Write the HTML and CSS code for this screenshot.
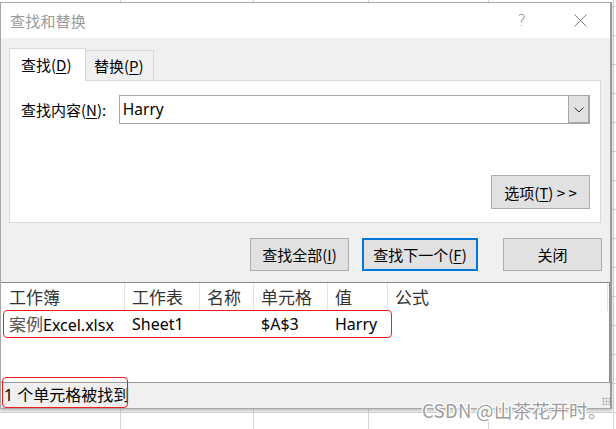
FILE: index.html
```html
<!DOCTYPE html>
<html lang="zh">
<head>
<meta charset="utf-8">
<title>查找和替换</title>
<link rel="stylesheet" href="styles.css">
</head>
<body>
<div class="dialog">
  <div class="titlebar">
    <span class="title">查找和替换</span>
    <span class="help">?</span>
    <svg class="close" width="13" height="13" viewBox="0 0 13 13"><path d="M0.5 0.5L12.5 12.5M12.5 0.5L0.5 12.5" stroke="#808080" stroke-width="1" fill="none"/></svg>
  </div>
  <div class="content">
    <div class="tabs">
      <div class="tab active">查找(<u>D</u>)</div>
      <div class="tab">替换(<u>P</u>)</div>
    </div>
    <div class="panel">
      <div class="find-row">
        <span class="label">查找内容(<u>N</u>):</span>
        <div class="combo">
          <span class="combo-text">Harry</span>
          <span class="combo-btn"><svg width="10" height="6" viewBox="0 0 10 6"><path d="M0.5 0.5L5 5L9.5 0.5" stroke="#333" stroke-width="1" fill="none"/></svg></span>
        </div>
      </div>
      <div class="opt-row">
        <button class="btn opt">选项(<u>T</u>)&nbsp;&gt; &gt;</button>
      </div>
    </div>
    <div class="actions">
      <button class="btn all">查找全部(<u>I</u>)</button>
      <button class="btn next">查找下一个(<u>F</u>)</button>
      <button class="btn closebtn">关闭</button>
    </div>
  </div>
  <div class="results">
    <div class="grid head">
      <div class="cell">工作簿</div>
      <div class="cell">工作表</div>
      <div class="cell">名称</div>
      <div class="cell">单元格</div>
      <div class="cell">值</div>
      <div class="cell">公式</div>
    </div>
    <div class="grid row">
      <div class="cell"><span class="cn">案例</span>Excel.xlsx</div>
      <div class="cell">Sheet1</div>
      <div class="cell"></div>
      <div class="cell">$A$3</div>
      <div class="cell">Harry</div>
      <div class="cell"></div>
    </div>
  </div>
  <div class="status">1 个单元格被找到</div>
</div>
<div class="mark mark-row"></div>
<div class="mark mark-status"></div>
<div class="grip"></div>
<div class="watermark">CSDN @山茶花开时。</div>
</body>
</html>
```
FILE: styles.css
```css
html, body {
  margin: 0;
  padding: 0;
}
body {
  width: 616px;
  height: 429px;
  overflow: hidden;
  position: relative;
  font-family: "Noto Sans", "Noto Sans CJK SC", sans-serif;
  color: #000;
  background-color: #fff;
  background-image:
    linear-gradient(#d6d6d6, #d6d6d6),
    linear-gradient(#d6d6d6, #d6d6d6),
    linear-gradient(#d6d6d6, #d6d6d6),
    linear-gradient(#d6d6d6, #d6d6d6),
    linear-gradient(#d6d6d6, #d6d6d6),
    repeating-linear-gradient(to bottom, transparent 0 6px, #d6d6d6 6px 7px, transparent 7px 29px);
  background-size: 1px 100%, 1px 100%, 1px 100%, 1px 100%, 1px 100%, 100% 100%;
  background-position: 120px 0, 253px 0, 368px 0, 488px 0, 613px 0, 0 0;
  background-repeat: no-repeat;
}
u { text-decoration: underline; text-underline-offset: 2px; }

.dialog {
  margin-top: 2px;
  width: 612px;
  box-sizing: border-box;
  border: 1px solid #a8a8a8;
  border-right: 2px solid #9a9a9a;
  background: #f0f0f0;
  box-shadow: 0 2px 3px rgba(0,0,0,0.25);
}

.titlebar {
  height: 35px;
  background: #fff;
  display: flex;
  align-items: center;
  padding-left: 9px;
}
.title {
  font-family: "Noto Sans CJK SC", sans-serif;
  font-size: 15px;
  color: #9a9a9a;
  flex: 1;
  letter-spacing: 0.2px;
}
.help {
  font-family: "DejaVu Sans", sans-serif;
  font-size: 16px;
  color: #8a8a8a;
  font-weight: 300;
  margin-right: 48px;
}
.close {
  margin-right: 23px;
}

.content {
  padding: 10px 0 11px 0;
}
.tabs {
  display: flex;
  height: 32px;
  align-items: flex-end;
  padding-left: 8px;
  position: relative;
  z-index: 1;
}
.tab {
  box-sizing: border-box;
  font-family: "Noto Sans CJK SC", sans-serif;
  font-size: 15px;
  height: 30px;
  padding: 0 0 0 8px;
  display: flex;
  align-items: center;
  white-space: nowrap;
  border: 1px solid #d9d9d9;
  border-bottom: none;
  background: #f0f0f0;
  width: 68px;
}
.tab.active {
  background: #fff;
  height: 33px;
  margin-bottom: -1px;
  width: 77px;
  padding-left: 11px;
  padding-bottom: 1px;
}
.tab + .tab { border-left: none; }

.panel {
  margin-left: 8px;
  width: 592px;
  height: 143px;
  box-sizing: border-box;
  background: #fff;
  border: 1px solid #d9d9d9;
  padding: 14px 10px 0 11px;
}
.find-row {
  display: flex;
  align-items: center;
  height: 29px;
}
.label {
  font-family: "Noto Sans CJK SC", sans-serif;
  font-size: 15px;
  width: 98px;
  white-space: nowrap;
}
.combo {
  width: 472px;
  height: 29px;
  box-sizing: border-box;
  border: 1px solid #a6a6a6;
  display: flex;
  align-items: stretch;
}
.combo-text {
  flex: 1;
  font-size: 15.5px;
  padding-left: 3px;
  line-height: 26px;
}
.combo-btn {
  width: 20px;
  background: #e1e1e1;
  border: 1px solid #a6a6a6;
  border-width: 0 0 0 1px;
  display: flex;
  align-items: center;
  justify-content: center;
  box-shadow: inset -1px -1px 0 #a6a6a6;
}

.opt-row {
  display: flex;
  justify-content: flex-end;
  margin-top: 51px;
}
.btn {
  box-sizing: border-box;
  background: #e1e1e1;
  border: 1px solid #adadad;
  font-family: "Noto Sans CJK SC", sans-serif;
  font-size: 15px;
  color: #000;
  padding: 0;
  margin: 0;
  display: flex;
  align-items: center;
  justify-content: center;
  white-space: nowrap;
}
.opt {
  width: 99px;
  height: 34px;
}

.actions {
  display: flex;
  justify-content: flex-end;
  margin-top: 15px;
  padding-right: 8px;
  height: 33px;
}
.actions .btn { height: 33px; }
.all { width: 99px; }
.next {
  width: 116px;
  margin-left: 13px;
  border: 2px solid #0078d7;
}
.closebtn { width: 99px; margin-left: 25px; }

.results {
  height: 100px;
  box-sizing: border-box;
  background: #fff;
  border-top: 1px solid #8c8c8c;
  border-right: 1px solid #8c8c8c;
  margin-right: 0;
}
.grid {
  display: grid;
  grid-template-columns: 124px 75px 54px 74px 60px 220px;
  font-size: 16px;
}
.head {
  height: 28px;
  font-family: "Noto Sans CJK SC", sans-serif;
  font-size: 17px;
  color: #333;
  font-weight: 400;
}
.head .cell {
  border-right: 1px solid #e3e3e3;
  line-height: 28px;
  padding-left: 7px;
}
.head .cell:first-child { padding-left: 8px; }
.row {
  height: 26px;
}
.row .cell {
  line-height: 26px;
  padding-left: 7px;
}
.row .cell:first-child { padding-left: 8px; }
.cn {
  font-family: "Noto Sans CJK SC", sans-serif;
  font-size: 17px;
  color: #555;
  font-weight: 400;
}
.cell { box-sizing: border-box; white-space: nowrap; overflow: hidden; }

.status {
  height: 26px;
  box-sizing: border-box;
  border-top: 1px solid #9a9a9a;
  background: #f0f0f0;
  font-size: 16px;
  line-height: 25px;
  padding-left: 3px;
  font-family: "Noto Sans", "Noto Sans CJK SC", sans-serif;
}

.mark {
  position: absolute;
  border: 1px solid #f21d1d;
  border-radius: 4px;
  box-sizing: border-box;
}
.mark-row { left: 3px; top: 310px; width: 389px; height: 28px; }
.mark-status { left: 2px; top: 377px; width: 126px; height: 31px; }

.grip {
  position: absolute;
  left: 602px;
  top: 397px;
  width: 8px;
  height: 8px;
  background-image: radial-gradient(circle, #b5b5b5 0.9px, transparent 1.2px);
  background-size: 3px 3px;
}

.watermark {
  position: absolute;
  left: 422px;
  top: 397px;
  font-family: "Noto Sans CJK SC", sans-serif;
  font-size: 18.5px;
  letter-spacing: 0.3px;
  color: rgba(130,130,130,0.8);
  text-shadow: 1px 1px 0 #fff, -1px -1px 0 #fff, 1px -1px 0 #fff, -1px 1px 0 #fff;
  white-space: nowrap;
}
```
